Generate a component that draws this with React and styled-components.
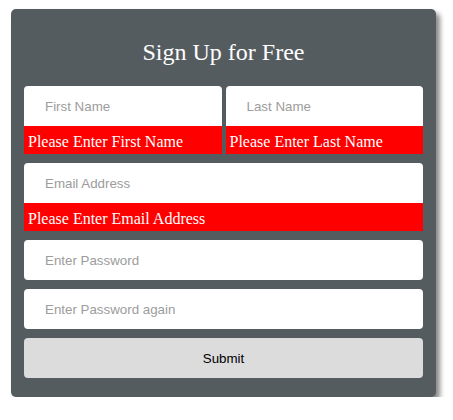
import styled, { createGlobalStyle } from 'styled-components'

const GlobalStyle = createGlobalStyle`
    body {
        margin: 0;
        background: #ffffff;
    }
`

const Page = styled.div`
    padding: 9px 0 0 11px;
`

const Card = styled.form`
    box-sizing: border-box;
    width: 425px;
    background: #555c60;
    border-radius: 5px;
    padding: 29px 13px 19px;
    box-shadow: 4px 4px 5px #8a8a8a;
    display: flex;
    flex-direction: column;
`

const Title = styled.h2`
    margin: 0 0 20px;
    font-family: "Liberation Serif", "Times New Roman", serif;
    font-weight: normal;
    font-size: 24px;
    line-height: 28px;
    color: #ffffff;
    text-align: center;
`

const Fields = styled.div`
    display: flex;
    flex-direction: column;
    gap: 9px;
`

const NameRow = styled.div`
    display: grid;
    grid-template-columns: 1fr 1fr;
    column-gap: 4px;
`

const Field = styled.div`
    display: flex;
    flex-direction: column;
`

const Input = styled.input`
    box-sizing: border-box;
    width: 100%;
    height: 40px;
    border: none;
    border-radius: 4px;
    ${(props) => props.$hasError && 'border-radius: 4px 4px 0 0;'}
    background: #ffffff;
    padding: 0 21px;
    font-family: "Liberation Sans", Arial, sans-serif;
    font-size: 13.33px;
    color: #333;
    outline: none;

    &::placeholder {
        color: #9c9c9c;
    }
`

const Error = styled.div`
    box-sizing: border-box;
    height: 28px;
    background: #ff0000;
    color: #ffffff;
    padding: 4px 4px 0;
    font-family: "Liberation Serif", "Times New Roman", serif;
    font-size: 16px;
    line-height: 24px;
    white-space: nowrap;
    overflow: hidden;
`

const Button = styled.button`
    height: 40px;
    border: none;
    border-radius: 4px;
    background: #dcdcdc;
    color: #000000;
    font-family: "Liberation Sans", Arial, sans-serif;
    font-size: 13.33px;
    cursor: pointer;
`

export default function App() {
    return (
        <>
            <GlobalStyle />
            <Page>
                <Card onSubmit={(e) => e.preventDefault()}>
                    <Title>Sign Up for Free</Title>
                    <Fields>
                        <NameRow>
                            <Field>
                                <Input $hasError placeholder="First Name" />
                                <Error>Please Enter First Name</Error>
                            </Field>
                            <Field>
                                <Input $hasError placeholder="Last Name" />
                                <Error>Please Enter Last Name</Error>
                            </Field>
                        </NameRow>
                        <Field>
                            <Input $hasError type="email" placeholder="Email Address" />
                            <Error>Please Enter Email Address</Error>
                        </Field>
                        <Input type="password" placeholder="Enter Password" />
                        <Input type="password" placeholder="Enter Password again" />
                        <Button type="submit">Submit</Button>
                    </Fields>
                </Card>
            </Page>
        </>
    )
}
